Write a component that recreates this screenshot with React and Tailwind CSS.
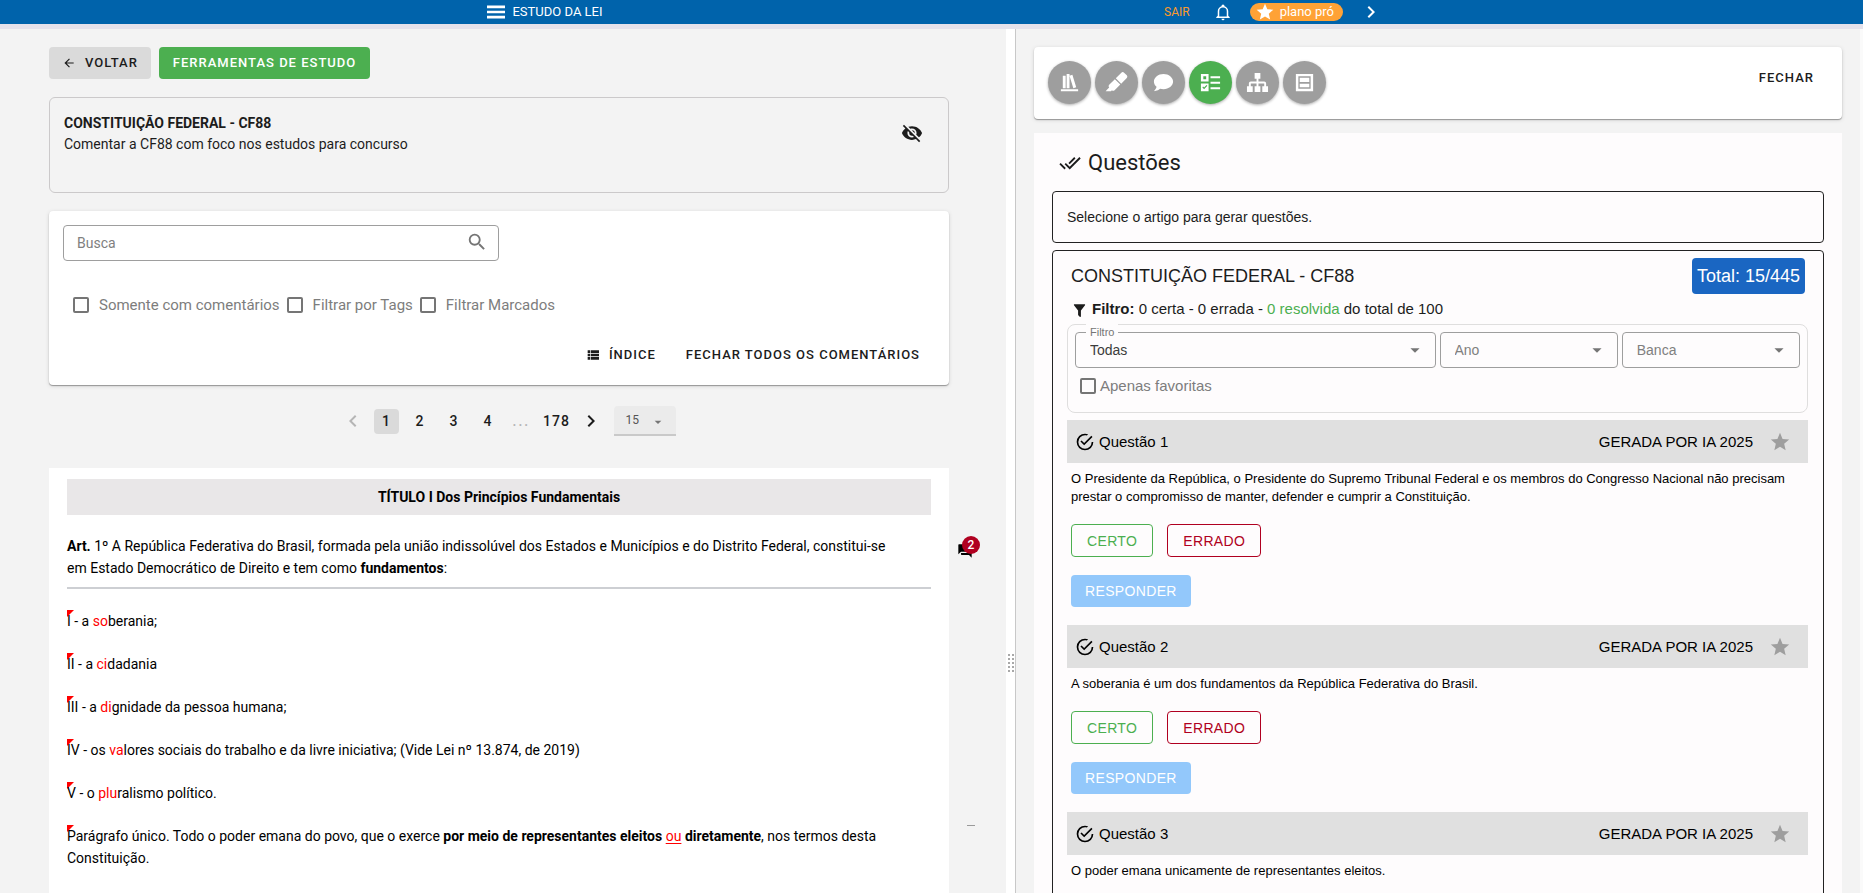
import React from "react";

const ICONS = {
  bookshelf: "M9 3V18H12V3H9M12 5L16 18L19 17L15 4L12 5M5 5V18H8V5H5M3 19V21H21V19H3Z",
  marker:
    "M18.5,1.15C17.97,1.15 17.46,1.34 17.07,1.73L11.26,7.55L16.91,13.2L22.73,7.39C23.5,6.61 23.5,5.35 22.73,4.56L19.89,1.73C19.5,1.34 19,1.15 18.5,1.15M10.3,8.5L4.34,14.46C3.56,15.24 3.56,16.5 4.36,17.31C3.14,18.54 1.9,19.77 0.67,21H6.33L7.19,20.14C7.97,20.9 9.22,20.89 10,20.12L15.95,14.16",
  chat: "M12,3C17.5,3 22,6.58 22,11C22,15.42 17.5,19 12,19C10.76,19 9.57,18.82 8.47,18.5C5.55,21 2,21 2,21C4.33,18.67 4.7,17.1 4.75,16.5C3.05,15.07 2,13.13 2,11C2,6.58 6.5,3 12,3Z",
  checklist:
    "M2,3H10V11H2V3M4.5,5.5V8.5H7.5V5.5H4.5M12,5.5H22V7.5H12V5.5M12,11.2H22V13.2H12V11.2M2,13H10V21H2V13M3.5,17L5.3,19L8.7,15.5L7.8,14.6L5.3,17.2L4.3,16.1L3.5,17M12,17H22V19H12V17Z",
  sitemap:
    "M9,2V8H11V11H5C3.89,11 3,11.89 3,13V16H1V22H7V16H5V13H11V16H9V22H15V16H13V13H19V16H17V22H23V16H21V13C21,11.89 20.11,11 19,11H13V8H15V2H9Z",
  frame: "M3,3H21V21H3V3M5.6,5.6V18.4H18.4V5.6H5.6M7,7H17V11.6H7V7M7,13.2H17V17H7V13.2Z",
  star: "M12,17.27L18.18,21L16.54,13.97L22,9.24L14.81,8.62L12,2L9.19,8.62L2,9.24L7.45,13.97L5.82,21L12,17.27Z",
  bell: "M10,21H14A2,2 0 0,1 12,23A2,2 0 0,1 10,21M21,19V20H3V19L5,17V11C5,7.9 7.03,5.17 10,4.29C10,4.19 10,4.1 10,4A2,2 0 0,1 12,2A2,2 0 0,1 14,4C14,4.1 14,4.19 14,4.29C16.97,5.17 19,7.9 19,11V17L21,19M17,11A5,5 0 0,0 12,6A5,5 0 0,0 7,11V18H17V11Z",
  right: "M8.59,16.58L13.17,12L8.59,7.41L10,6L16,12L10,18L8.59,16.58Z",
  left: "M15.41,16.58L10.83,12L15.41,7.41L14,6L8,12L14,18L15.41,16.58Z",
  menu: "M3,5.6H21V8.2H3V5.6M3,10.7H21V13.3H3V10.7M3,15.8H21V18.4H3V15.8Z",
  back: "M20,11V13H8L13.5,18.5L12.08,19.92L4.16,12L12.08,4.08L13.5,5.5L8,11H20Z",
  eyeOff:
    "M11.83,9L15,12.16C15,12.11 15,12.05 15,12A3,3 0 0,0 12,9C11.94,9 11.89,9 11.83,9M7.53,9.8L9.08,11.35C9.03,11.56 9,11.77 9,12A3,3 0 0,0 12,15C12.22,15 12.44,14.97 12.65,14.92L14.2,16.47C13.53,16.8 12.79,17 12,17A5,5 0 0,1 7,12C7,11.21 7.2,10.47 7.53,9.8M2,4.27L4.28,6.55L4.73,7C3.08,8.3 1.78,10 1,12C2.73,16.39 7,19.5 12,19.5C13.55,19.5 15.03,19.2 16.38,18.66L16.81,19.08L19.73,22L21,20.73L3.27,3M12,7A5,5 0 0,1 17,12C17,12.64 16.87,13.26 16.64,13.82L19.57,16.75C21.07,15.5 22.27,13.86 23,12C21.27,7.61 17,4.5 12,4.5C10.6,4.5 9.26,4.75 8,5.2L10.17,7.35C10.74,7.13 11.35,7 12,7Z",
  search:
    "M9.5,3A6.5,6.5 0 0,1 16,9.5C16,11.11 15.41,12.59 14.44,13.73L14.71,14H15.5L20.5,19L19,20.5L14,15.5V14.71L13.73,14.44C12.59,15.41 11.11,16 9.5,16A6.5,6.5 0 0,1 3,9.5A6.5,6.5 0 0,1 9.5,3M9.5,5C7,5 5,7 5,9.5C5,12 7,14 9.5,14C12,14 14,12 14,9.5C14,7 12,5 9.5,5Z",
  list: "M9,5V9H21V5M9,19H21V15H9M9,14H21V10H9M4,9H8V5H4M4,19H8V15H4M4,14H8V10H4V14Z",
  forum:
    "M17,12V3A1,1 0 0,0 16,2H3A1,1 0 0,0 2,3V17L6,13H16A1,1 0 0,0 17,12M21,6H19V15H6V17A1,1 0 0,0 7,18H18L22,22V7A1,1 0 0,0 21,6Z",
  checkAll:
    "M0.41,13.41L6,19L7.41,17.58L1.83,12M22.24,5.58L11.66,16.17L7.5,12L6.07,13.41L11.66,19L23.66,7M18,7L16.59,5.58L10.24,11.93L11.66,13.34L18,7Z",
  filter:
    "M14,12V19.88C14.04,20.18 13.94,20.5 13.71,20.71C13.32,21.1 12.69,21.1 12.3,20.71L10.29,18.7C10.06,18.47 9.96,18.16 10,17.87V12H9.97L4.21,4.62C3.87,4.19 3.95,3.56 4.38,3.22C4.57,3.08 4.78,3 5,3H19C19.22,3 19.43,3.08 19.62,3.22C20.05,3.56 20.13,4.19 19.79,4.62L14.03,12H14Z",
  done: "M20,12A8,8 0 0,1 12,20A8,8 0 0,1 4,12A8,8 0 0,1 12,4C12.76,4 13.5,4.11 14.2,4.31L15.77,2.74C14.61,2.26 13.34,2 12,2A10,10 0 0,0 2,12A10,10 0 0,0 12,22A10,10 0 0,0 22,12M7.91,10.08L6.5,11.5L11,16L21,6L19.59,4.58L11,13.17L7.91,10.08Z",
  down: "M7,10L12,15L17,10H7Z",
};

function Icon({ name, className }) {
  return (
    <svg viewBox="0 0 24 24" fill="currentColor" aria-hidden="true" className={`shrink-0 ${className}`}>
      <path d={ICONS[name]} fillRule={name === "frame" || name === "checklist" ? "evenodd" : "nonzero"} />
    </svg>
  );
}

function Header() {
  return (
    <header className="flex h-[29px] shrink-0 border-b-[5px] border-[#e4e2eb] bg-[#0063ab] text-white">
      <div className="flex w-[1014px] items-center justify-center gap-1 pl-[73px] text-[13px]">
        <button aria-label="Menu">
          <Icon name="menu" className="size-6" />
        </button>
        <span>ESTUDO DA LEI</span>
      </div>
      <div className="flex flex-1 items-center pl-[150px]">
        <a href="#sair" className="text-xs text-[#fb9a2c]">SAIR</a>
        <button aria-label="Notificações" className="ml-6">
          <Icon name="bell" className="size-[18px]" />
        </button>
        <a href="#plano" className="ml-[18px] flex h-[18px] items-center gap-[5px] rounded-full bg-[#ffa236] pr-[9px] pl-[5px] text-[13px]">
          <Icon name="star" className="size-5" />
          plano pró
        </a>
        <button aria-label="Avançar" className="ml-4">
          <Icon name="right" className="size-6" />
        </button>
      </div>
    </header>
  );
}

function CheckBox({ label, className }) {
  return (
    <label className={`flex items-center text-[15px] leading-5 text-[#7d7d7d] ${className}`}>
      <input type="checkbox" className="size-4 shrink-0 appearance-none rounded-[2px] border-2 border-[#757575]" />
      {label}
    </label>
  );
}

const PAGES = ["2", "3", "4"];

function Pagination() {
  return (
    <nav aria-label="Páginas" className="mt-[21px] flex h-[30px] items-center justify-center pl-[18px] text-sm font-medium text-[#1c1c1c]">
      <button aria-label="Anterior" className="mr-[9px] text-[#b5b5b5]">
        <Icon name="left" className="size-6" />
      </button>
      <button className="h-[25px] w-[25px] rounded-[4px] bg-[#dadada]">1</button>
      <div className="mx-1 flex">
        {PAGES.map((p) => (
          <button key={p} className="w-[34px]">{p}</button>
        ))}
      </div>
      <span className="w-[30px] pl-1 tracking-[2px] text-[#b5b5b5]">...</span>
      <button className="w-[36px] tracking-[1px]">178</button>
      <button aria-label="Próxima" className="ml-1">
        <Icon name="right" className="size-6" />
      </button>
      <div className="relative ml-[11px] h-[30px] w-[62px] border-b-2 border-[#c9c9c9]">
        <select aria-label="Itens por página" className="h-full w-full appearance-none rounded-t-[4px] bg-[#ebebeb] pl-3 text-xs font-normal text-[#555]">
          <option>15</option>
        </select>
        <Icon name="down" className="pointer-events-none absolute top-2 right-[10px] size-4 text-[#757575]" />
      </div>
    </nav>
  );
}

function Item({ children }) {
  return (
    <div className="relative">
      <svg viewBox="0 0 7 7" className="absolute top-0 left-0 size-[7px] text-[#f00]" aria-hidden="true">
        <path d="M0,0H7L0,7Z" fill="currentColor" />
      </svg>
      <p className="relative">{children}</p>
    </div>
  );
}

function Red({ children }) {
  return <span className="text-[#f00]">{children}</span>;
}

function Law() {
  return (
    <article className="mt-8 min-h-[426px] bg-white px-[18px] pt-[11px] text-sm leading-[22px] text-black">
      <h2 className="flex h-9 items-center justify-center bg-[#e9e7e8] font-bold">TÍTULO I Dos Princípios Fundamentais</h2>
      <div className="relative mt-5">
        <p className="pr-8">
          <b>Art.</b> 1º A República Federativa do Brasil, formada pela união indissolúvel dos Estados e Municípios e do
          Distrito Federal, constitui-se em Estado Democrático de Direito e tem como <b>fundamentos</b>:
        </p>
        <button aria-label="2 comentários" className="absolute top-[8px] -right-[42px] text-black">
          <Icon name="forum" className="size-4" />
          <span className="absolute -top-[7px] left-[5px] size-[18px] rounded-full bg-[#b00020] text-center text-xs leading-[18px] font-medium text-white">
            2
          </span>
        </button>
      </div>
      <hr className="mt-2 border-t-2 border-[#cdcfd3]" />
      <div className="mt-[21px] flex flex-col gap-[21px]">
        <Item>I - a <Red>so</Red>berania;</Item>
        <Item>II - a <Red>ci</Red>dadania</Item>
        <Item>III - a <Red>di</Red>gnidade da pessoa humana;</Item>
        <Item>IV - os <Red>va</Red>lores sociais do trabalho e da livre iniciativa; (Vide Lei nº 13.874, de 2019)</Item>
        <Item>V - o <Red>plu</Red>ralismo político.</Item>
        <div className="relative">
          <Item>
            Parágrafo único. Todo o poder emana do povo, que o exerce <b>por meio de representantes eleitos</b>{" "}
            <span className="text-[#f00] underline underline-offset-2">ou</span> <b>diretamente</b>, nos termos desta
            Constituição.
          </Item>
          <span className="absolute top-0 -right-[44px] h-px w-2 bg-[#9a9a9a]" />
        </div>
      </div>
    </article>
  );
}

function LeftPanel() {
  return (
    <section className="w-[1006px] shrink-0 overflow-hidden bg-[#f3f3f3] pt-[18px] pr-[57px] pl-[49px]">
      <div className="flex gap-2 text-[13px] font-medium">
        <button className="flex h-8 items-center gap-[9px] rounded-[4px] bg-[#dadada] px-[13px] tracking-[1px] text-[#1c1c1c]">
          <Icon name="back" className="size-[14px]" />
          VOLTAR
        </button>
        <button className="h-8 rounded-[4px] bg-[#4caf50] px-[14px] tracking-[1px] text-white">FERRAMENTAS DE ESTUDO</button>
      </div>

      <div className="mt-[18px] flex h-24 justify-between rounded-[6px] border border-[#cbc9ca] pt-[15px] pr-[25px] pl-[14px] text-sm leading-[21px] text-[#1c1c1c]">
        <div>
          <h1 className="font-bold">CONSTITUIÇÃO FEDERAL - CF88</h1>
          <p>Comentar a CF88 com foco nos estudos para concurso</p>
        </div>
        <button aria-label="Ocultar" className="mt-[9px] self-start">
          <Icon name="eyeOff" className="size-[22px]" />
        </button>
      </div>

      <div className="mt-[18px] h-[174px] rounded-[4px] bg-white px-[14px] pt-[14px] text-sm shadow-[0_1px_1px_#00000055,0_1px_4px_#00000022]">
        <div className="relative w-1/2">
          <input
            type="text"
            aria-label="Busca"
            placeholder="Busca"
            className="h-9 w-full rounded-[4px] border border-[#9e9e9e] px-[13px] placeholder:text-[#808080]"
          />
          <Icon name="search" className="absolute top-[6px] right-[11px] size-[22px] text-[#757575]" />
        </div>
        <div className="mt-[34px] flex gap-[7px] pl-[10px]">
          <CheckBox label="Somente com comentários" className="gap-[10px]" />
          <CheckBox label="Filtrar por Tags" className="gap-[10px]" />
          <CheckBox label="Filtrar Marcados" className="gap-[10px]" />
        </div>
        <div className="mt-[30px] flex justify-end gap-[30px] pr-[15px] text-[13px] leading-5 font-medium tracking-[1px] text-[#1c1c1c]">
          <button className="flex items-center gap-2">
            <Icon name="list" className="size-4" />
            ÍNDICE
          </button>
          <button>FECHAR TODOS OS COMENTÁRIOS</button>
        </div>
      </div>

      <Pagination />
      <Law />
    </section>
  );
}

const DOT_ROWS = [1, 5, 9, 13, 17];

function Splitter() {
  return (
    <div role="separator" aria-orientation="vertical" className="flex w-[10px] shrink-0 items-center justify-center border-r border-[#c8c8c8] bg-white pt-[404px]">
      <svg viewBox="0 0 8 18" className="h-[18px] w-2 text-[#a8a8a8]" aria-hidden="true">
        {DOT_ROWS.map((y) => (
          <path key={y} d={`M1,${y - 1}h2v2h-2zM5,${y - 1}h2v2h-2z`} fill="currentColor" />
        ))}
      </svg>
    </div>
  );
}

const TOOLS = [
  { name: "bookshelf", label: "Biblioteca" },
  { name: "marker", label: "Marcador" },
  { name: "chat", label: "Comentários" },
  { name: "checklist", label: "Questões" },
  { name: "sitemap", label: "Mapa" },
  { name: "frame", label: "Cartões" },
];

function Toolbar() {
  return (
    <div className="flex h-[72px] justify-between rounded-[4px] bg-white pt-[14px] pr-[28px] pl-[14px] shadow-[0_1px_1px_#00000055,0_1px_4px_#00000022]">
      <div className="flex gap-1">
        {TOOLS.map((t) => (
          <button
            key={t.name}
            aria-label={t.label}
            className={`flex size-[43px] items-center justify-center rounded-full pb-px text-white shadow-[0_1px_3px_#00000055] ${
              t.name === "checklist" ? "bg-[#4caf50]" : "bg-[#9e9e9e]"
            }`}
          >
            <Icon name={t.name} className="size-[23px]" />
          </button>
        ))}
      </div>
      <button className="mt-[7px] self-start text-[13px] leading-5 font-medium tracking-[1px] text-[#1c1c1c]">FECHAR</button>
    </div>
  );
}

function FilterSelect({ label, value, className = "" }) {
  return (
    <div className={`relative ${className}`}>
      <select
        aria-label={label}
        className={`h-9 w-full appearance-none rounded-[4px] border border-[#9e9e9e] bg-transparent px-[14px] ${
          value ? "text-[#3c3c3c]" : "text-[#808080]"
        }`}
      >
        <option>{value || label}</option>
      </select>
      {value && (
        <span className="absolute -top-2 left-[11px] bg-[#fefcfd] px-1 text-[11px] leading-4 text-[#757575]">{label}</span>
      )}
      <Icon name="down" className="pointer-events-none absolute top-[7px] right-[10px] size-[22px] text-[#757575]" />
    </div>
  );
}

const QUESTIONS = [
  "O Presidente da República, o Presidente do Supremo Tribunal Federal e os membros do Congresso Nacional não precisam prestar o compromisso de manter, defender e cumprir a Constituição.",
  "A soberania é um dos fundamentos da República Federativa do Brasil.",
  "O poder emana unicamente de representantes eleitos.",
];

function Question({ number, text }) {
  return (
    <section className="pb-[18px] text-black">
      <div className="flex h-[43px] items-center bg-[#e0e0e0] pr-[17px] pl-2 text-[15px]">
        <Icon name="done" className="size-5" />
        <h3 className="ml-1">Questão {number}</h3>
        <span className="ml-auto">GERADA POR IA 2025</span>
        <button aria-label="Favoritar" className="ml-4 text-[#9e9e9e]">
          <Icon name="star" className="size-[22px]" />
        </button>
      </div>
      <div className="px-1">
        <p className="pt-[7px] text-[13px] leading-[18px]">{text}</p>
        <div className="mt-[18px] flex gap-[14px] text-sm tracking-wide">
          <button className="h-[33px] rounded-[4px] border border-[#4caf50] px-[15px] text-[#4caf50]">CERTO</button>
          <button className="h-[33px] rounded-[4px] border border-[#b00020] px-[15px] text-[#b00020]">ERRADO</button>
        </div>
        <button className="mt-[18px] block h-8 rounded-[4px] bg-[#93c8fb] px-[14px] text-sm tracking-wide text-white">
          RESPONDER
        </button>
      </div>
    </section>
  );
}

function RightPanel() {
  return (
    <section className="min-w-0 flex-1 overflow-hidden border-r-[3px] border-[#fafafa] bg-[#f3f3f3] pt-[18px] pr-[18px] pl-[18px]">
      <Toolbar />
      <div className="mt-[14px] bg-[#fefcfd] px-[18px] pt-[15px] font-['Liberation_Sans',sans-serif] text-sm text-[#1c1c1c]">
        <h2 className="flex items-center gap-[7px] pl-[7px] font-[Roboto,sans-serif] text-[22px] leading-[30px]">
          <Icon name="checkAll" className="size-[22px]" />
          Questões
        </h2>
        <div className="mt-[13px] flex h-[52px] items-center rounded-[4px] border border-[#222] px-[14px]">
          Selecione o artigo para gerar questões.
        </div>
        <div className="mt-[7px] rounded-[4px] border border-[#222] pt-[7px] pr-[15px] pl-[14px]">
          <div className="flex items-center justify-between pr-[3px] pl-1 text-lg">
            <h3>CONSTITUIÇÃO FEDERAL - CF88</h3>
            <span className="flex h-9 items-center rounded-[4px] bg-[#1a66c2] px-[5px] text-white">Total: 15/445</span>
          </div>
          <p className="mt-[5px] flex items-center gap-1 pl-1 text-[15px] leading-5">
            <Icon name="filter" className="mt-[2px] size-[17px]" />
            <span>
              <b>Filtro:</b> 0 certa - 0 errada - <span className="text-[#4caf50]">0 resolvida</span> do total de 100
            </span>
          </p>
          <div className="mt-[5px] h-[89px] rounded-lg border border-[#dfdede] px-[7px] pt-[7px]">
            <div className="grid grid-cols-4 gap-1">
              <FilterSelect label="Filtro" value="Todas" className="col-span-2" />
              <FilterSelect label="Ano" />
              <FilterSelect label="Banca" />
            </div>
            <CheckBox label="Apenas favoritas" className="mt-2 gap-1 pl-[5px]" />
          </div>
          <div className="mt-[7px]">
            {QUESTIONS.map((q, i) => (
              <Question key={q} number={i + 1} text={q} />
            ))}
          </div>
        </div>
      </div>
    </section>
  );
}

export default function App() {
  return (
    <div className="flex h-screen flex-col overflow-hidden bg-white font-[Roboto,sans-serif]">
      <Header />
      <main className="flex min-h-0 flex-1">
        <LeftPanel />
        <Splitter />
        <RightPanel />
      </main>
    </div>
  );
}
